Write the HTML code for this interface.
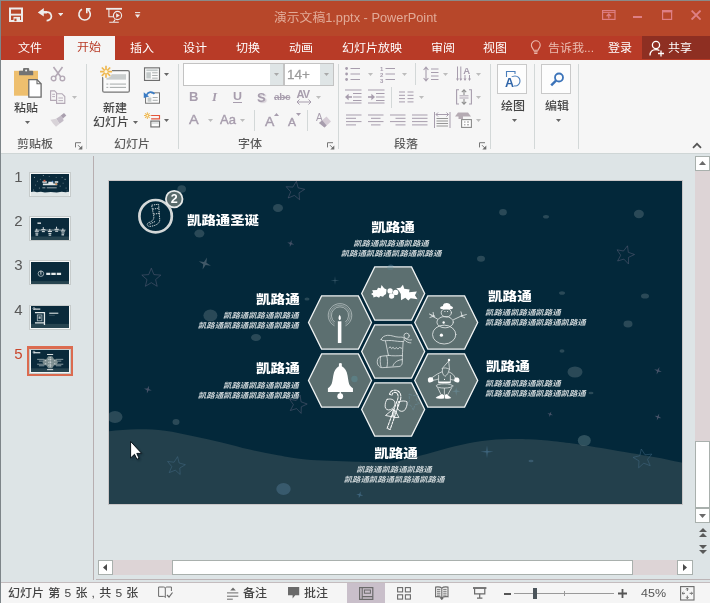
<!DOCTYPE html>
<html lang="zh-CN">
<head>
<meta charset="utf-8">
<title>演示文稿1.pptx - PowerPoint</title>
<style>
*{box-sizing:border-box;margin:0;padding:0}
html,body{width:710px;height:603px;overflow:hidden;background:#dde4e6}
body{position:relative;font-family:"Liberation Sans","Noto Sans CJK SC",sans-serif;font-size:12px;color:#444}
#app{will-change:transform;position:absolute;left:0;top:0;width:710px;height:603px;overflow:hidden}
#app div,#app svg,#app span{position:absolute}
.t{white-space:nowrap;line-height:1;font-weight:500;transform:scaleY(0.94);transform-origin:50% 58%}
.w{color:#fff}
.lb{color:#5c5c5c}
.sep{width:1px;background:#d3d8d8}
.st{font-family:"Liberation Sans","Noto Sans CJK SC",sans-serif;font-weight:900;color:#fff;font-size:12.25px;white-space:nowrap;line-height:1}
.ss{font-family:"Liberation Sans","Noto Sans CJK SC",sans-serif;font-style:italic;font-weight:bold;color:#ccd4d7;font-size:7.3px;white-space:nowrap;line-height:10px}
</style>
</head>
<body>
<div id="app">
<div id="title" style="left:0;top:0;width:710px;height:36px;background:#b7472a">
<svg style="left:9px;top:7px" width="15" height="16" viewBox="0 0 15 16" ><path d="M1 1.6h12v12.3h-12z" fill="none" stroke="#eeeceb" stroke-width="2"/><rect x="1" y="6.7" width="12" height="1.9" fill="#eeeceb"/><rect x="4.5" y="9.9" width="6.5" height="5" fill="#eeeceb"/><rect x="5.4" y="11.6" width="2.1" height="2.6" fill="#b5492a"/></svg>
<svg style="left:37px;top:7px" width="16" height="15" viewBox="0 0 16 15" ><polygon points="0.8,5.5 6.8,0.9 6.8,3.9 10,3.9 10,6.6 6.8,6.6 6.8,9.6" fill="#eeeceb"/><path d="M6.5 5.2 H10.2 a4.1 4.1 0 0 1 2.6 7.3 C12 13.1 10.8 13.6 9.6 13.6" fill="none" stroke="#eeeceb" stroke-width="1.7"/></svg>
<svg style="left:58px;top:13px" width="5.4" height="3.2" viewBox="0 0 5.4 3.2" ><polygon points="0,0 5.4,0 2.7,3.2" fill="#eeeceb"/></svg>
<svg style="left:77px;top:7px" width="16" height="16" viewBox="0 0 16 16" ><path d="M10.6 2.5 A5.7 5.7 0 1 1 5.0 2.3" fill="none" stroke="#eeeceb" stroke-width="1.6"/><path d="M9.8 6.2 V1.9 H13.6" fill="none" stroke="#eeeceb" stroke-width="1.6"/></svg>
<svg style="left:106px;top:7px" width="17" height="17" viewBox="0 0 17 17" ><path d="M0.1 1.8H16" stroke="#eeeceb" stroke-width="1.8"/><path d="M2.9 2V9.7H7.4" fill="none" stroke="#eeeceb" stroke-width="1.1"/><path d="M9 12.6L7.4 15.2M3.2 15.3H12.8" fill="none" stroke="#eeeceb" stroke-width="1.1"/><circle cx="11.5" cy="8.5" r="4.1" fill="none" stroke="#eeeceb" stroke-width="1.1"/><polygon points="10.2,6.3 13.8,8.5 10.2,10.7" fill="#eeeceb"/></svg>
<svg style="left:134px;top:12px" width="7" height="7" viewBox="0 0 7 7" ><rect x="1" y="0.1" width="5.2" height="1" fill="#eeeceb"/><polygon points="1,2.6 6.2,2.6 3.6,6" fill="#eeeceb"/></svg>
<div class="t" style="left:274px;top:12px;font-size:12.8px;color:#e2ab98;font-weight:400">演示文稿1.pptx - PowerPoint</div>
<svg style="left:602px;top:10px" width="14" height="10" viewBox="0 0 14 10" ><rect x="0.6" y="0.6" width="12.4" height="8.8" fill="none" stroke="#de7f84" stroke-width="1.2"/><path d="M1 2.4H13" stroke="#de7f84" stroke-width="1"/><path d="M6.8 8.6V4.2M4.6 6.2L6.8 4L9 6.2" fill="none" stroke="#de7f84" stroke-width="1.3"/></svg>
<div style="left:633px;top:16px;width:9px;height:2px;background:#de7f84"></div>
<svg style="left:662px;top:10px" width="11" height="10" viewBox="0 0 11 10" ><rect x="0.6" y="0.6" width="9" height="8.8" fill="none" stroke="#de7f84" stroke-width="1.2"/><rect x="0" y="0" width="10.2" height="2.4" fill="#de7f84"/></svg>
<svg style="left:691px;top:10px" width="10" height="10" viewBox="0 0 10 10" ><path d="M0.6 0.6L9.6 9.6M9.6 0.6L0.6 9.6" stroke="#de7f84" stroke-width="1.9"/></svg>
</div>
<div id="tabs" style="left:0;top:36px;width:710px;height:24px;background:#b83b27">
<div style="left:64px;top:0;width:51px;height:24px;background:#f5f5f5"></div>
<div class="t" style="left:18px;top:6px;color:#fff;font-weight:400">文件</div>
<div class="t" style="left:77px;top:5.4px;color:#b83b27;font-weight:400">开始</div>
<div class="t" style="left:130px;top:6px;color:#fff;font-weight:400">插入</div>
<div class="t" style="left:183px;top:6px;color:#fff;font-weight:400">设计</div>
<div class="t" style="left:236px;top:6px;color:#fff;font-weight:400">切换</div>
<div class="t" style="left:289px;top:6px;color:#fff;font-weight:400">动画</div>
<div class="t" style="left:342px;top:6px;color:#fff;font-weight:400">幻灯片放映</div>
<div class="t" style="left:431px;top:6px;color:#fff;font-weight:400">审阅</div>
<div class="t" style="left:483px;top:6px;color:#fff;font-weight:400">视图</div>
<svg style="left:530px;top:4px" width="12" height="16" viewBox="0 0 12 16" ><path d="M3.6 10.2 C3.4 8.6 1.4 7.6 1.4 5.2 A4.4 4.4 0 0 1 10.2 5.2 C10.2 7.6 8.2 8.6 8 10.2 Z" fill="none" stroke="#eab8ac" stroke-width="1.1"/><path d="M3.8 11.8H7.8M4.2 13.4H7.4" stroke="#eab8ac" stroke-width="1.1"/></svg>
<div class="t" style="left:548px;top:6px;color:#ebbdb1;font-weight:400">告诉我...</div>
<div class="t" style="left:608px;top:6px;color:#fff;font-weight:400">登录</div>
<div style="left:642px;top:0;width:68px;height:23px;background:#8e2f22"></div>
<svg style="left:649px;top:4px" width="16" height="17" viewBox="0 0 16 17" ><circle cx="7" cy="5" r="3.6" fill="none" stroke="#fff" stroke-width="1.3"/><path d="M1 15.5 C1 11.5 3.5 9.6 7 9.6 C8.4 9.6 9.6 9.9 10.4 10.5" fill="none" stroke="#fff" stroke-width="1.3"/><path d="M12 10.5V16.5M9 13.5H15" stroke="#fff" stroke-width="1.3"/></svg>
<div class="t" style="left:668px;top:6px;color:#fff;font-weight:400">共享</div>
</div>
<div id="ribbon" style="left:0;top:60px;width:710px;height:94px;background:#f6f6f6;border-bottom:1px solid #cfd6d6">
<svg style="left:14px;top:7px" width="29" height="32" viewBox="0 0 29 32" ><rect x="0" y="3.8" width="24" height="24.9" fill="#eebf6e"/><path d="M5 8.3V4.6a0.8 0.8 0 0 1 0.8-0.8H9V2a1.1 1.1 0 0 1 1.1-1.1h4a1.1 1.1 0 0 1 1.1 1.1V3.8H18.4a0.8 0.8 0 0 1 0.8 0.8V8.3Z" fill="#737373"/><circle cx="12.1" cy="3.4" r="1" fill="#f0f0f0"/><path d="M14.8 12.6H23L27.1 16.7V30.1H14.8Z" fill="#fff" stroke="#6a6a6a" stroke-width="1.3"/><path d="M23 12.6V16.7H27.1" fill="none" stroke="#6a6a6a" stroke-width="1.1"/></svg>
<div class="t" style="left:14px;top:42px;color:#444">粘贴</div>
<svg style="left:25px;top:61px" width="5" height="3" viewBox="0 0 5 3" ><polygon points="0,0 5,0 2.5,3" fill="#666"/></svg>
<svg style="left:50px;top:6px" width="16" height="16" viewBox="0 0 16 16" ><path d="M3.5 1L10.8 11M12.5 1L5.2 11" stroke="#b3a8b5" stroke-width="1.6" fill="none"/><circle cx="3.6" cy="12.4" r="2.3" fill="none" stroke="#b3a8b5" stroke-width="1.4"/><circle cx="12.4" cy="12.4" r="2.3" fill="none" stroke="#b3a8b5" stroke-width="1.4"/></svg>
<svg style="left:50px;top:30px" width="16" height="14" viewBox="0 0 16 14" ><path d="M0.6 0.9H4.6L6.6 2.9V10.4H0.6Z" fill="none" stroke="#b3a8b5" stroke-width="1.1"/><path d="M2.2 4.3H5M2.2 6.6H5" stroke="#b3a8b5" stroke-width="0.9"/><path d="M6.6 3.7H12L14.8 6.5V13.4H6.6Z" fill="#f5f5f5" stroke="#b3a8b5" stroke-width="1.1"/><path d="M8.4 8H13M8.4 10.6H13" stroke="#b3a8b5" stroke-width="0.9"/></svg>
<svg style="left:72px;top:36px" width="5" height="3" viewBox="0 0 5 3" ><polygon points="0,0 5,0 2.5,3" fill="#bdbdbd"/></svg>
<svg style="left:0;top:0" width="90" height="94" viewBox="0 0 710 741.6"><polygon points="478,440 505,419 523,438 497,461" fill="#a99fae"/><polygon points="443,463 478,440 497,461 502,480 470,502" fill="#c3bbc6"/><polygon points="398,472 443,463 470,502 442,526 420,503" fill="#d8d3d8"/></svg>
<div class="t lb" style="left:17px;top:78.19999999999999px;">剪贴板</div>
<svg style="left:75px;top:82px" width="8" height="8" viewBox="0 0 8 8" ><path d="M0.5 5.4V0.7H6" fill="none" stroke="#777" stroke-width="1"/><path d="M3 3.2L6 6.2" fill="none" stroke="#777" stroke-width="1"/><polygon points="7.3,3.4 7.3,7.4 3.3,7.4" fill="#6e6e6e"/></svg>
<div class="sep" style="left:86px;top:4px;height:85px"></div>
<svg style="left:88px;top:0px" width="90" height="70" viewBox="0 0 710.0 552.2"><rect x="116" y="84" width="210" height="170" rx="12" fill="#fbfbfb" stroke="#757575" stroke-width="10"/><rect x="145" y="112" width="155" height="43" fill="#c9cdcd"/><path d="M145 190H160M172 190H300M145 216H160M172 216H300" stroke="#9a9f9f" stroke-width="7"/><circle cx="142" cy="92" r="50" fill="#f5f5f5"/><g stroke="#efb850" stroke-width="13"><path d="M142 45V140M95 92H190M109 59L175 125M175 59L109 125"/></g><circle cx="142" cy="92" r="13" fill="#fdf6e2"/></svg>
<div class="t" style="left:103px;top:42px;color:#444">新建</div>
<div class="t" style="left:93px;top:56px;color:#444">幻灯片</div>
<svg style="left:133px;top:61px" width="5" height="3" viewBox="0 0 5 3" ><polygon points="0,0 5,0 2.5,3" fill="#666"/></svg>
<svg style="left:88px;top:0px" width="90" height="70" viewBox="0 0 710.0 552.2"><rect x="446" y="62" width="118" height="99" fill="#fcfcfc" stroke="#6c6c6c" stroke-width="9"/><rect x="460" y="74" width="90" height="14" fill="#c3c9c9"/><rect x="460" y="96" width="36" height="50" fill="#c3c9c9"/><path d="M506 101H550M506 122H550M506 143H550" stroke="#8f9494" stroke-width="6"/><rect x="454" y="259" width="110" height="82" fill="#fcfcfc" stroke="#747474" stroke-width="8"/><rect x="470" y="296" width="30" height="33" fill="#c3c9c9"/><path d="M510 296H550M510 318H550" stroke="#8f9494" stroke-width="6"/><rect x="436" y="240" width="60" height="52" fill="#f5f5f5"/><path d="M524 268 C505 246 475 250 462 275" fill="none" stroke="#3a7cc5" stroke-width="13"/><polygon points="440,255 482,288 440,300" fill="#3a7cc5"/><g stroke="#efb850" stroke-width="8"><path d="M468 412V465M442 438H494M450 420L486 456M486 420L450 456"/></g><circle cx="468" cy="438" r="7" fill="#fdf6e2"/><path d="M498 438H564V464H498" fill="none" stroke="#e4553b" stroke-width="9"/><rect x="496" y="482" width="68" height="46" fill="#fcfcfc" stroke="#6c6c6c" stroke-width="9"/><path d="M505 497H556" stroke="#c3c9c9" stroke-width="8"/></svg>
<svg style="left:164px;top:13px" width="5" height="3" viewBox="0 0 5 3" ><polygon points="0,0 5,0 2.5,3" fill="#666"/></svg>
<svg style="left:164px;top:59px" width="5" height="3" viewBox="0 0 5 3" ><polygon points="0,0 5,0 2.5,3" fill="#666"/></svg>
<div class="t lb" style="left:114px;top:78.19999999999999px;">幻灯片</div>
<div class="sep" style="left:178px;top:4px;height:85px"></div>
<div style="left:183px;top:3px;width:101px;height:23px;background:#fff;border:1px solid #c3c3c3"></div>
<div style="left:270px;top:4px;width:13px;height:21px;background:#dfe5e6"></div>
<svg style="left:274px;top:13px" width="5" height="3" viewBox="0 0 5 3" ><polygon points="0,0 5,0 2.5,3" fill="#a9a9a9"/></svg>
<div style="left:284px;top:3px;width:50px;height:23px;background:#fff;border:1px solid #c3c3c3"></div>
<div style="left:320px;top:4px;width:13px;height:21px;background:#dfe5e6"></div>
<svg style="left:324px;top:13px" width="5" height="3" viewBox="0 0 5 3" ><polygon points="0,0 5,0 2.5,3" fill="#a9a9a9"/></svg>
<div class="t" style="left:287px;top:8px;font-size:13.5px;color:#9b9b9b;-webkit-text-stroke:0.3px #9b9b9b">14+</div>
<div class="t" style="left:189px;top:30px;font-size:13px;font-weight:bold;color:#a79dad">B</div>
<div class="t" style="left:212px;top:30px;font-size:13px;font-weight:bold;font-style:italic;font-family:'Liberation Serif',serif;color:#a79dad">I</div>
<div class="t" style="left:233px;top:30px;font-size:12.5px;color:#a79dad;font-weight:bold">U</div>
<div style="left:233px;top:42px;width:9px;height:1px;background:#a79dad"></div>
<div class="t" style="left:257px;top:31px;font-size:13px;font-weight:bold;color:#a79dad;text-shadow:1.5px 1.5px 1px #d5cfd6">S</div>
<div class="t" style="left:274px;top:32px;font-size:10px;color:#a79dad;text-decoration:line-through;font-weight:bold;letter-spacing:-0.3px">abc</div>
<div class="t" style="left:296.5px;top:28.5px;font-size:11px;color:#a79dad;font-weight:bold;letter-spacing:-0.9px">AV</div>
<svg style="left:296px;top:39px" width="16" height="6" viewBox="0 0 16 6" ><path d="M1 3H15M3.5 0.5L1 3L3.5 5.5M12.5 0.5L15 3L12.5 5.5" fill="none" stroke="#a79dad" stroke-width="1"/></svg>
<svg style="left:316px;top:36px" width="5" height="3" viewBox="0 0 5 3" ><polygon points="0,0 5,0 2.5,3" fill="#bdbdbd"/></svg>
<div class="t" style="left:189px;top:52.3px;font-size:14.5px;color:#a79dad;-webkit-text-stroke:0.4px #a79dad">A</div>
<svg style="left:208px;top:59px" width="5" height="3" viewBox="0 0 5 3" ><polygon points="0,0 5,0 2.5,3" fill="#bdbdbd"/></svg>
<div class="t" style="left:220px;top:53.2px;font-size:13px;color:#a79dad;-webkit-text-stroke:0.4px #a79dad">Aa</div>
<svg style="left:240px;top:59px" width="5" height="3" viewBox="0 0 5 3" ><polygon points="0,0 5,0 2.5,3" fill="#bdbdbd"/></svg>
<div class="sep" style="left:254px;top:50px;height:21px"></div>
<div class="t" style="left:265px;top:54px;font-size:14px;color:#a79dad;-webkit-text-stroke:0.4px #a79dad">A</div>
<svg style="left:274px;top:53px" width="5" height="3" viewBox="0 0 5 3" ><polygon points="0,3 5,3 2.5,0" fill="#a79dad"/></svg>
<div class="t" style="left:288px;top:56px;font-size:12px;color:#a79dad;-webkit-text-stroke:0.4px #a79dad">A</div>
<svg style="left:296px;top:53px" width="5" height="3" viewBox="0 0 5 3" ><polygon points="0,0 5,0 2.5,3" fill="#a79dad"/></svg>
<div class="sep" style="left:307px;top:50px;height:21px"></div>
<svg style="left:316px;top:52px" width="16" height="17" viewBox="0 0 16 17" ><text x="0" y="9" font-size="10" fill="#a79dad" font-family="Liberation Sans, sans-serif">A</text><path d="M3 11L10.5 4.5L15 9.5L8.5 15.5Z" fill="#d6cdd6"/><path d="M3 11L6.2 8.2L10.6 13.4L8.5 15.5Z" fill="#a79dad"/></svg>
<div class="t lb" style="left:238px;top:78.19999999999999px;">字体</div>
<svg style="left:327px;top:82px" width="8" height="8" viewBox="0 0 8 8" ><path d="M0.5 5.4V0.7H6" fill="none" stroke="#777" stroke-width="1"/><path d="M3 3.2L6 6.2" fill="none" stroke="#777" stroke-width="1"/><polygon points="7.3,3.4 7.3,7.4 3.3,7.4" fill="#6e6e6e"/></svg>
<div class="sep" style="left:338px;top:4px;height:85px"></div>
<svg style="left:345px;top:6px" width="16" height="16" viewBox="0 0 16 16" ><circle cx="1.6" cy="2.5" r="1.4" fill="#a79dad"/><circle cx="1.6" cy="8" r="1.4" fill="#a79dad"/><circle cx="1.6" cy="13.5" r="1.4" fill="#a79dad"/><path d="M5.5 2.5H15M5.5 8H15M5.5 13.5H15" stroke="#a79dad" stroke-width="1.1"/></svg>
<svg style="left:368px;top:13px" width="5" height="3" viewBox="0 0 5 3" ><polygon points="0,0 5,0 2.5,3" fill="#bdbdbd"/></svg>
<svg style="left:380px;top:5px" width="16" height="18" viewBox="0 0 16 18" ><text x="0" y="5.5" font-size="6" fill="#a79dad" font-family="Liberation Sans, sans-serif" font-weight="bold">1</text><text x="0" y="11.5" font-size="6" fill="#a79dad" font-family="Liberation Sans, sans-serif" font-weight="bold">2</text><text x="0" y="17.5" font-size="6" fill="#a79dad" font-family="Liberation Sans, sans-serif" font-weight="bold">3</text><path d="M5.5 3.5H15M5.5 9H15M5.5 14.5H15" stroke="#a79dad" stroke-width="1.1"/></svg>
<svg style="left:402px;top:13px" width="5" height="3" viewBox="0 0 5 3" ><polygon points="0,0 5,0 2.5,3" fill="#bdbdbd"/></svg>
<div class="sep" style="left:415px;top:3px;height:22px"></div>
<svg style="left:423px;top:6px" width="16" height="16" viewBox="0 0 16 16" ><path d="M3 1.5V14.5M0.6 4L3 1.2L5.4 4M0.6 12L3 14.8L5.4 12" fill="none" stroke="#a79dad" stroke-width="1.1"/><path d="M8 3H15.5M8 6.5H15.5M8 10H15.5M8 13.5H15.5" stroke="#a79dad" stroke-width="1.1"/></svg>
<svg style="left:443px;top:13px" width="5" height="3" viewBox="0 0 5 3" ><polygon points="0,0 5,0 2.5,3" fill="#bdbdbd"/></svg>
<svg style="left:456px;top:6px" width="16" height="16" viewBox="0 0 16 16" ><path d="M1.5 0.5V14M4.8 0.5V14M9 9V14M13.5 9V14" stroke="#a79dad" stroke-width="1"/><path d="M0 12.5L1.5 15L3 12.5M3.3 12.5L4.8 15L6.3 12.5M7.5 12.5L9 15L10.5 12.5M12 12.5L13.5 15L15 12.5" fill="#a79dad"/><text x="7.2" y="8" font-size="9.5" font-weight="bold" fill="#a79dad" font-family="Liberation Sans, sans-serif">A</text></svg>
<svg style="left:476px;top:13px" width="5" height="3" viewBox="0 0 5 3" ><polygon points="0,0 5,0 2.5,3" fill="#bdbdbd"/></svg>
<svg style="left:345px;top:29px" width="17" height="15" viewBox="0 0 17 15" ><path d="M0 1H16.5M8 4.5H16.5M8 8H16.5M8 11.5H16.5M0 14H16.5" stroke="#a79dad" stroke-width="1"/><path d="M1 8H7" stroke="#a79dad" stroke-width="1.6"/><polygon points="0,8 3.6,4.8 3.6,11.2" fill="#a79dad"/></svg>
<svg style="left:368px;top:29px" width="17" height="15" viewBox="0 0 17 15" ><path d="M0 1H16.5M8 4.5H16.5M8 8H16.5M8 11.5H16.5M0 14H16.5" stroke="#a79dad" stroke-width="1"/><path d="M0 8H5" stroke="#a79dad" stroke-width="1.6"/><polygon points="7,8 3.4,4.8 3.4,11.2" fill="#a79dad"/></svg>
<div class="sep" style="left:391px;top:27px;height:21px"></div>
<svg style="left:399px;top:31px" width="15" height="12" viewBox="0 0 15 12" ><path d="M0 1H6M8.5 1H14.5M0 4.3H6M8.5 4.3H14.5M0 7.6H6M8.5 7.6H14.5M0 10.9H6M8.5 10.9H14.5" stroke="#a79dad" stroke-width="1"/></svg>
<svg style="left:419px;top:36px" width="5" height="3" viewBox="0 0 5 3" ><polygon points="0,0 5,0 2.5,3" fill="#bdbdbd"/></svg>
<svg style="left:456px;top:29px" width="16" height="16" viewBox="0 0 16 16" ><path d="M3 0.8H0.6V15H3M13 0.8H15.4V15H13" fill="none" stroke="#a79dad" stroke-width="1.1"/><path d="M8 1V6M5.8 3.2L8 0.8L10.2 3.2M8 15V10M5.8 12.8L8 15.2L10.2 12.8" fill="none" stroke="#8f8f8f" stroke-width="1.1"/><path d="M3.5 6.8H12.5M3.5 9H12.5" stroke="#a79dad" stroke-width="0.9"/></svg>
<svg style="left:476px;top:36px" width="5" height="3" viewBox="0 0 5 3" ><polygon points="0,0 5,0 2.5,3" fill="#bdbdbd"/></svg>
<svg style="left:346px;top:54px" width="16" height="12" viewBox="0 0 16 12" ><path d="M0 1H15.5M0 4.3H10M0 7.6H15.5M0 10.9H10" stroke="#a79dad" stroke-width="1"/></svg>
<svg style="left:368px;top:54px" width="16" height="12" viewBox="0 0 16 12" ><path d="M0 1H15.5M3 4.3H12.5M0 7.6H15.5M3 10.9H12.5" stroke="#a79dad" stroke-width="1"/></svg>
<svg style="left:390px;top:54px" width="16" height="12" viewBox="0 0 16 12" ><path d="M0 1H15.5M5.5 4.3H15.5M0 7.6H15.5M5.5 10.9H15.5" stroke="#a79dad" stroke-width="1"/></svg>
<svg style="left:412px;top:54px" width="16" height="12" viewBox="0 0 16 12" ><path d="M0 1H15.5M0 4.3H15.5M0 7.6H15.5M0 10.9H15.5" stroke="#a79dad" stroke-width="1"/></svg>
<svg style="left:434px;top:52px" width="17" height="16" viewBox="0 0 17 16" ><path d="M0.5 0V16M16 0V16" stroke="#a79dad" stroke-width="1"/><path d="M2 2.5H14.5M4 0.5L2 2.5L4 4.5M12.5 0.5L14.5 2.5L12.5 4.5" fill="none" stroke="#a79dad" stroke-width="1"/><path d="M2.5 6.5H14M2.5 9H14M2.5 11.5H14M2.5 14H14" stroke="#8a8a8a" stroke-width="0.9"/></svg>
<svg style="left:455px;top:52px" width="17" height="16" viewBox="0 0 17 16" ><path d="M0 4.5L3 0.5H13L16 4.5H8V7H3.5V4.5Z" fill="#b5abb3"/><rect x="6.6" y="7.6" width="9.8" height="7.8" fill="#fff" stroke="#8a8a8a" stroke-width="1.1"/><path d="M9 10H10.5M12 10H14M9 12.8H10.5M12 12.8H14" stroke="#8a8a8a" stroke-width="0.9"/></svg>
<svg style="left:476px;top:59px" width="5" height="3" viewBox="0 0 5 3" ><polygon points="0,0 5,0 2.5,3" fill="#bdbdbd"/></svg>
<div class="t lb" style="left:394px;top:78.19999999999999px;">段落</div>
<svg style="left:479px;top:82px" width="8" height="8" viewBox="0 0 8 8" ><path d="M0.5 5.4V0.7H6" fill="none" stroke="#777" stroke-width="1"/><path d="M3 3.2L6 6.2" fill="none" stroke="#777" stroke-width="1"/><polygon points="7.3,3.4 7.3,7.4 3.3,7.4" fill="#6e6e6e"/></svg>
<div class="sep" style="left:490px;top:4px;height:85px"></div>
<div style="left:497px;top:4px;width:30px;height:30px;background:#fdfdfd;border:1px solid #c9c9c9"></div>
<svg style="left:503px;top:9.5px" width="19" height="19" viewBox="0 0 19 19" ><path d="M3.5 10V1.5H12V4" fill="none" stroke="#4a7ebb" stroke-width="1.1"/><circle cx="12" cy="11" r="5" fill="none" stroke="#4a7ebb" stroke-width="1.1"/><rect x="2" y="7" width="9" height="11" fill="#fdfdfd"/><text x="2" y="17" font-size="12.5" font-weight="bold" fill="#2e64a8" font-family="Liberation Sans, sans-serif">A</text></svg>
<div class="t" style="left:501px;top:40px;color:#444">绘图</div>
<svg style="left:512px;top:59px" width="5" height="3" viewBox="0 0 5 3" ><polygon points="0,0 5,0 2.5,3" fill="#666"/></svg>
<div class="sep" style="left:534px;top:4px;height:85px"></div>
<div style="left:541px;top:4px;width:30px;height:30px;background:#fdfdfd;border:1px solid #c9c9c9"></div>
<svg style="left:549.8px;top:12px" width="15" height="15" viewBox="0 0 15 15" ><circle cx="9" cy="5.5" r="4" fill="none" stroke="#3b73b9" stroke-width="1.8"/><path d="M6 8.6L1.2 13.4" stroke="#3b73b9" stroke-width="2.4"/></svg>
<div class="t" style="left:545px;top:40px;color:#444">编辑</div>
<svg style="left:556px;top:59px" width="5" height="3" viewBox="0 0 5 3" ><polygon points="0,0 5,0 2.5,3" fill="#666"/></svg>
<div class="sep" style="left:578px;top:4px;height:85px"></div>
<svg style="left:692px;top:81.5px" width="10" height="7" viewBox="0 0 10 7" ><path d="M1 5.8L5 1.8L9 5.8" fill="none" stroke="#555" stroke-width="1.7"/></svg>
</div>
<div id="work" style="left:0;top:154px;width:710px;height:428px;background:#dde4e6">
<div style="left:93px;top:2px;width:1px;height:424px;background:#b7aeb0"></div>
<div class="t" style="left:14.3px;top:15.300000000000011px;font-size:15px;color:#585858">1</div>
<div style="left:29.3px;top:18.30000000000001px;width:41.4px;height:25px;background:#f4f6f6;border:1px solid #c6cbcb"></div>
<svg style="left:30.7px;top:19.600000000000023px" width="38.6" height="22.4" viewBox="0 0 39 23" preserveAspectRatio="none"><rect width="39" height="23" fill="#0a2a3b"/><path d="M0 18.6 L3 18 L6 18.8 L10 18.2 L14 19 L20 18.4 L26 19 L31 18.2 L35 18.8 L39 18.2 V23 H0Z" fill="#dfe6e7"/><path d="M11.5 8.2H16M17.5 8.8H22.5M24 8.2H27.5M12 10.6H26.5" stroke="#e4e9ea" stroke-width="1.7"/><path d="M11.5 14.2H14.5M16 14.2H26" stroke="#aab7bc" stroke-width="0.9"/><rect x="12.6" y="6" width="2" height="1.8" fill="#d4553c"/><rect x="24.6" y="9.6" width="1.8" height="1.6" fill="#d98a4c"/><rect x="21" y="7" width="1.4" height="1.4" fill="#5b8fd0"/><rect x="3" y="3" width="0.9" height="0.9" fill="#cfd8da" fill-opacity="0.8"/><rect x="6" y="7" width="0.9" height="0.9" fill="#cfd8da" fill-opacity="0.6"/><rect x="8" y="14" width="0.9" height="0.9" fill="#cfd8da" fill-opacity="0.7"/><rect x="4" y="11" width="0.9" height="0.9" fill="#cfd8da" fill-opacity="0.5"/><rect x="31" y="3" width="0.9" height="0.9" fill="#cfd8da" fill-opacity="0.7"/><rect x="34" y="5" width="0.9" height="0.9" fill="#cfd8da" fill-opacity="0.9"/><rect x="29" y="12" width="0.9" height="0.9" fill="#cfd8da" fill-opacity="0.7"/><rect x="35" y="14" width="0.9" height="0.9" fill="#cfd8da" fill-opacity="0.6"/><rect x="18" y="2" width="0.9" height="0.9" fill="#cfd8da" fill-opacity="0.5"/><rect x="12" y="1" width="0.9" height="0.9" fill="#cfd8da" fill-opacity="0.8"/><rect x="25" y="3" width="0.9" height="0.9" fill="#cfd8da" fill-opacity="0.5"/><rect x="9" y="5" width="0.9" height="0.9" fill="#cfd8da" fill-opacity="0.5"/><rect x="32" y="9" width="0.9" height="0.9" fill="#cfd8da" fill-opacity="0.5"/><rect x="2" y="16" width="0.9" height="0.9" fill="#cfd8da" fill-opacity="0.6"/><rect x="36" y="17" width="0.9" height="0.9" fill="#cfd8da" fill-opacity="0.5"/></svg>
<div class="t" style="left:14.3px;top:59.30000000000001px;font-size:15px;color:#585858">2</div>
<div style="left:29.3px;top:62.30000000000001px;width:41.4px;height:25px;background:#f4f6f6;border:1px solid #c6cbcb"></div>
<svg style="left:30.7px;top:63.60000000000002px" width="38.6" height="22.4" viewBox="0 0 39 23" preserveAspectRatio="none"><rect width="39" height="23" fill="#0a2a3b"/><rect y="19" width="39" height="4" fill="#274450"/><rect x="6.5" y="4.6" width="3.6" height="1.4" fill="#e4e9ea"/><path d="M4 12.4H35" stroke="#aab7bc" stroke-width="0.8"/><path d="M3.8 13.6h4.2M4.3999999999999995 15.6h3M5.8 11.0v2" stroke="#e4e9ea" stroke-width="1"/><path d="M10.4 12h4.2M11.0 14h3M12.4 9.4v2" stroke="#e4e9ea" stroke-width="1"/><path d="M17 13.8h4.2M17.6 15.8h3M19 11.200000000000001v2" stroke="#e4e9ea" stroke-width="1"/><path d="M23.8 11.6h4.2M24.400000000000002 13.6h3M25.8 9.0v2" stroke="#e4e9ea" stroke-width="1"/><path d="M30.2 13.4h4.2M30.8 15.4h3M32.2 10.8v2" stroke="#e4e9ea" stroke-width="1"/><rect x="4.6" y="16.6" width="2.6" height="1.6" fill="#aab7bc"/><rect x="17.8" y="16.8" width="2.6" height="1.6" fill="#aab7bc"/><rect x="30.8" y="16.4" width="2.6" height="1.6" fill="#aab7bc"/></svg>
<div class="t" style="left:14.3px;top:103.30000000000001px;font-size:15px;color:#585858">3</div>
<div style="left:29.3px;top:106.30000000000001px;width:41.4px;height:25px;background:#f4f6f6;border:1px solid #c6cbcb"></div>
<svg style="left:30.7px;top:107.60000000000002px" width="38.6" height="22.4" viewBox="0 0 39 23" preserveAspectRatio="none"><rect width="39" height="23" fill="#0a2a3b"/><rect y="19.6" width="39" height="3.4" fill="#274450"/><circle cx="10" cy="12" r="2.8" fill="none" stroke="#aab7bc" stroke-width="0.9"/><path d="M10 9V13" stroke="#e4e9ea" stroke-width="0.9"/><path d="M15.4 12.2H19.5M20.5 12.2H25M26 12.2H30.4" stroke="#e4e9ea" stroke-width="2.2"/></svg>
<div class="t" style="left:14.3px;top:147.5px;font-size:15px;color:#585858">4</div>
<div style="left:29.3px;top:150.5px;width:41.4px;height:25px;background:#f4f6f6;border:1px solid #c6cbcb"></div>
<svg style="left:30.7px;top:151.8px" width="38.6" height="22.4" viewBox="0 0 39 23" preserveAspectRatio="none"><rect width="39" height="23" fill="#0a2a3b"/><rect y="18.4" width="39" height="4.6" fill="#274450"/><path d="M2.6 3.2H9.4" stroke="#e4e9ea" stroke-width="1.2"/><circle cx="3" cy="2.6" r="1" fill="none" stroke="#e4e9ea" stroke-width="0.6"/><path d="M4 6.8H13.6V19.6M4 17.4H13.4" fill="none" stroke="#e4e9ea" stroke-width="1.3"/><rect x="6.4" y="9.2" width="4.6" height="6" fill="none" stroke="#aab7bc" stroke-width="0.9"/><rect x="7.6" y="10.6" width="2.2" height="2.6" fill="#aab7bc"/><path d="M18.4 7.4H27.6" stroke="#e4e9ea" stroke-width="1.1"/><path d="M18.4 9.6H24" stroke="#aab7bc" stroke-width="0.5" stroke-opacity="0.6"/></svg>
<div class="t" style="left:14.3px;top:191.5px;font-size:15px;color:#c9462c">5</div>
<div style="left:27px;top:192.0px;width:46px;height:29.6px;background:#db6b50"></div>
<div style="left:29.3px;top:194.5px;width:41.4px;height:25px;background:#f4f6f6;border:1px solid #c6cbcb"></div>
<svg style="left:30.7px;top:195.8px" width="38.6" height="22.4" viewBox="0 0 39 23" preserveAspectRatio="none"><rect width="39" height="23" fill="#0a2a3b"/><rect y="18.8" width="39" height="4.2" fill="#274450"/><path d="M2.6 2.8H9.4" stroke="#e4e9ea" stroke-width="1.2"/><circle cx="3" cy="2.2" r="1" fill="none" stroke="#e4e9ea" stroke-width="0.6"/><path d="M16.2 4.6H22.4M16.2 20.2H22.4" stroke="#e4e9ea" stroke-width="1"/><path d="M6.2 9.6H13.4M8 11.4H13.4M6.2 14.6H13.4M8 16.2H13.4M25.2 9.6H32.6M25.2 11.4H30.6M25.2 14.6H32.6M25.2 16.2H30.6" stroke="#aab7bc" stroke-width="0.8"/><path d="M17.4 6.4h4l2 3.2 2.2 0 1.6 3-1.6 3-2.2 0-2 3.2h-4l-2-3.2-2.2 0-1.6-3 1.6-3 2.2 0z" fill="#7d8e90"/><path d="M17.4 9.6h4M17.4 12.6h4M17.4 15.6h4M15.4 11h-2M15.4 14.2h-2M23.4 11h2M23.4 14.2h2M19.4 7v11.6" stroke="#e4e9ea" stroke-width="0.8" stroke-dasharray="1.2 0.7"/></svg>
<div id="slide" style="left:109px;top:27px;width:573px;height:323px;background:#03283a;overflow:hidden;box-shadow:0 0 0 1px #c9c6c7">
<svg style="left:0;top:0" width="573" height="323" viewBox="0 0 573 323"><path d="M-20.0 253.0 C-16.7 252.6 -8.0 251.1 0.0 250.3 C8.0 249.5 18.7 248.4 28.0 248.3 C37.3 248.2 46.6 248.5 56.0 249.7 C65.4 250.9 75.0 253.3 84.5 255.3 C94.0 257.3 103.3 259.3 112.7 261.5 C122.1 263.7 131.4 266.5 140.8 268.6 C150.2 270.7 159.6 272.6 169.0 274.2 C178.4 275.8 184.0 277.3 197.0 278.4 C210.0 279.5 229.8 280.1 247.0 280.7 C264.2 281.3 271.2 280.9 300.0 282.0 C328.8 283.1 374.5 285.3 420.0 287.0 C465.5 288.7 547.5 291.2 573.0 292.0 V330 H-20 Z" fill="#23404c"/><path d="M250.0 296.0 C253.3 294.5 263.2 289.7 270.0 287.0 C276.8 284.3 283.0 282.3 291.0 280.0 C299.0 277.7 308.6 275.4 317.8 273.0 C327.0 270.6 336.8 267.5 346.0 265.3 C355.2 263.1 364.0 261.2 373.0 260.0 C382.0 258.8 392.2 258.4 400.0 258.1 C407.8 257.8 412.5 257.9 420.0 258.3 C427.5 258.7 436.4 259.4 445.0 260.3 C453.6 261.2 460.1 262.0 471.6 263.7 C483.1 265.4 501.8 268.6 514.0 270.7 C526.2 272.8 535.2 274.2 545.0 276.0 C554.8 277.8 563.3 279.6 572.5 281.6 C581.7 283.6 595.4 286.9 600.0 288.0 V330 H250 Z" fill="#23404c"/><ellipse cx="72.69999999999999" cy="8" rx="4.3" ry="3.8" fill="#8fa0a6" fill-opacity="0.28"/><ellipse cx="169" cy="27" rx="5" ry="4" fill="#8fa0a6" fill-opacity="0.28"/><ellipse cx="90.4" cy="52.5" rx="5" ry="4" fill="#8fa0a6" fill-opacity="0.28"/><ellipse cx="101.4" cy="134.5" rx="7" ry="6" fill="#8fa0a6" fill-opacity="0.28"/><ellipse cx="6" cy="236" rx="7.5" ry="6" fill="#8fa0a6" fill-opacity="0.28"/><ellipse cx="67" cy="241" rx="3.5" ry="3" fill="#8fa0a6" fill-opacity="0.28"/><ellipse cx="394" cy="31.30000000000001" rx="3.8" ry="3.3" fill="#8fa0a6" fill-opacity="0.28"/><ellipse cx="437" cy="35.80000000000001" rx="3" ry="1.8" fill="#8fa0a6" fill-opacity="0.28"/><ellipse cx="529.9" cy="33" rx="5" ry="4.2" fill="#8fa0a6" fill-opacity="0.28"/><ellipse cx="372" cy="77.69999999999999" rx="4" ry="3" fill="#8fa0a6" fill-opacity="0.28"/><ellipse cx="453" cy="112" rx="3" ry="1.8" fill="#8fa0a6" fill-opacity="0.28"/><ellipse cx="536" cy="115" rx="4" ry="2.6" fill="#8fa0a6" fill-opacity="0.28"/><ellipse cx="519" cy="143" rx="4.5" ry="3.4" fill="#8fa0a6" fill-opacity="0.28"/><ellipse cx="466" cy="191" rx="7.5" ry="5.5" fill="#8fa0a6" fill-opacity="0.28"/><ellipse cx="453" cy="170" rx="2.5" ry="1.8" fill="#8fa0a6" fill-opacity="0.28"/><ellipse cx="482" cy="212" rx="2.5" ry="1.2" fill="#8fa0a6" fill-opacity="0.28"/><ellipse cx="198" cy="118" rx="2.5" ry="1.5" fill="#8fa0a6" fill-opacity="0.28"/><ellipse cx="147" cy="156.5" rx="5" ry="3.5" fill="#8fa0a6" fill-opacity="0.28"/><ellipse cx="174.5" cy="308" rx="7.2" ry="6" fill="#4a6f88" fill-opacity="0.55"/><ellipse cx="422" cy="280" rx="2.5" ry="1.2" fill="#4a6f88" fill-opacity="0.55"/><ellipse cx="281.8" cy="86" rx="3" ry="2.5" fill="#4a6f88" fill-opacity="0.55"/><ellipse cx="475.29999999999995" cy="259.5" rx="6.5" ry="5.6" fill="#7f9aa0" fill-opacity="0.35"/><polygon points="187.4,0.3 189.1,6.8 195.7,8.3 190.0,11.9 190.6,18.7 185.4,14.4 179.2,17.0 181.7,10.8 177.2,5.7 183.9,6.1" fill="none" stroke="#6f6c86" stroke-opacity="0.42" stroke-width="1"/><polygon points="42.3,87.2 44.9,93.6 51.8,94.1 46.6,98.6 48.2,105.3 42.3,101.7 36.4,105.3 38.0,98.6 32.8,94.1 39.7,93.6" fill="none" stroke="#6f6c86" stroke-opacity="0.42" stroke-width="1"/><polygon points="518.5,64.8 519.3,71.3 525.5,73.5 519.6,76.3 519.4,82.9 514.9,78.1 508.6,80.0 511.7,74.2 508.0,68.8 514.5,70.0" fill="none" stroke="#6f6c86" stroke-opacity="0.42" stroke-width="1"/><polygon points="191.2,214.3 192.0,220.8 198.2,223.0 192.3,225.8 192.1,232.4 187.6,227.6 181.3,229.5 184.4,223.7 180.7,218.3 187.2,219.5" fill="none" stroke="#6f6c86" stroke-opacity="0.42" stroke-width="1"/><polygon points="68.6,275.6 70.1,282.0 76.4,283.7 70.8,287.0 71.2,293.5 66.3,289.2 60.2,291.6 62.8,285.6 58.6,280.5 65.1,281.2" fill="none" stroke="#4a7390" stroke-opacity="0.42" stroke-width="1"/><polygon points="532.3,268.0 536.0,273.8 542.8,273.1 538.5,278.4 541.2,284.7 534.8,282.2 529.6,286.8 530.0,279.9 524.1,276.4 530.8,274.7" fill="none" stroke="#4a7390" stroke-opacity="0.42" stroke-width="1"/><polygon points="98.0,76.4 97.4,81.7 101.9,84.7 96.6,84.1 93.6,88.6 94.2,83.3 89.7,80.3 95.0,80.9" fill="#7d8894" fill-opacity="0.5"/><polygon points="182.6,59.0 182.6,62.0 185.2,63.4 182.2,63.4 180.8,66.0 180.8,63.0 178.2,61.6 181.2,61.6" fill="#6f6c86" fill-opacity="0.6"/><polygon points="39.9,204.7 39.9,208.0 42.8,209.6 39.5,209.6 37.9,212.5 37.9,209.2 35.0,207.6 38.3,207.6" fill="#6f6c86" fill-opacity="0.6"/><polygon points="550.4,185.9 550.0,189.2 552.8,191.1 549.5,190.7 547.6,193.5 548.0,190.2 545.2,188.3 548.5,188.7" fill="#6f6c86" fill-opacity="0.6"/><polygon points="550.2,232.6 549.9,235.6 552.4,237.2 549.4,236.9 547.8,239.4 548.1,236.4 545.6,234.8 548.6,235.1" fill="#6f6c86" fill-opacity="0.6"/><polygon points="442.2,230.5 442.0,232.9 444.0,234.3 441.6,234.1 440.2,236.1 440.4,233.7 438.4,232.3 440.8,232.5" fill="#6f6c86" fill-opacity="0.6"/><polygon points="251.6,310.3 251.6,313.3 254.2,314.7 251.2,314.7 249.8,317.3 249.8,314.3 247.2,312.9 250.2,312.9" fill="#4a7390" fill-opacity="0.7"/><polygon points="226.0,95.0 226.5,99.0 230.5,99.5 226.5,100.0 226.0,104.0 225.5,100.0 221.5,99.5 225.5,99.0" fill="#6d8796" fill-opacity="0.45"/><polygon points="378.0,264.2 378.7,270.0 384.5,270.7 378.7,271.4 378.0,277.2 377.3,271.4 371.5,270.7 377.3,270.0" fill="#4a7390" fill-opacity="0.7"/><polygon points="363.0,193.5 363.4,196.6 366.5,197.0 363.4,197.4 363.0,200.5 362.6,197.4 359.5,197.0 362.6,196.6" fill="#6d8796" fill-opacity="0.4"/><polygon points="321.0,122.0 321.5,125.5 325.0,126.0 321.5,126.5 321.0,130.0 320.5,126.5 317.0,126.0 320.5,125.5" fill="#6d8796" fill-opacity="0.4"/></svg>
<svg style="left:0;top:0" width="573" height="323" viewBox="0 0 573 323"><polygon points="252.65,112.50 265.75,85.95 302.55,85.95 315.65,112.50 302.55,139.05 265.75,139.05" fill="#5c6f70" stroke="#f1f4f4" stroke-width="1.3"/><polygon points="199.50,141.50 212.60,114.95 249.40,114.95 262.50,141.50 249.40,168.05 212.60,168.05" fill="#5c6f70" stroke="#f1f4f4" stroke-width="1.3"/><polygon points="305.70,141.50 318.80,114.95 355.60,114.95 368.70,141.50 355.60,168.05 318.80,168.05" fill="#5c6f70" stroke="#f1f4f4" stroke-width="1.3"/><polygon points="252.65,170.50 265.75,143.95 302.55,143.95 315.65,170.50 302.55,197.05 265.75,197.05" fill="#5c6f70" stroke="#f1f4f4" stroke-width="1.3"/><polygon points="199.50,199.50 212.60,172.95 249.40,172.95 262.50,199.50 249.40,226.05 212.60,226.05" fill="#5c6f70" stroke="#f1f4f4" stroke-width="1.3"/><polygon points="305.70,199.50 318.80,172.95 355.60,172.95 368.70,199.50 355.60,226.05 318.80,226.05" fill="#5c6f70" stroke="#f1f4f4" stroke-width="1.3"/><polygon points="252.65,228.50 265.75,201.95 302.55,201.95 315.65,228.50 302.55,255.05 265.75,255.05" fill="#5c6f70" stroke="#f1f4f4" stroke-width="1.3"/><g transform="translate(193,168) scale(0.10704)" ><circle cx="490" cy="280" r="30" fill="#5d8a94" fill-opacity="0.55"/></g><g transform="translate(299,168) scale(0.10704)" ><path d="M450 355 L456 388 L490 395 L456 402 L450 438 L444 402 L410 395 L444 388Z" fill="#6f98a8" fill-opacity="0.5"/></g><g transform="translate(246,197) scale(0.10704)" ><path d="M505 150 L545 165 L585 160 L570 205 L600 240 L560 250 L545 300 L520 255 L485 250 L510 215Z" fill="none" stroke="#6f98a8" stroke-opacity="0.45" stroke-width="8" stroke-dasharray="30 8"/></g><g transform="translate(246,81) scale(0.10704)" ><ellipse cx="330" cy="55" rx="30" ry="20" fill="#5d8a94" fill-opacity="0.3"/><path d="M560 300 C600 280 610 330 580 380" fill="none" stroke="#6f98a8" stroke-opacity="0.35" stroke-width="8"/></g><g transform="translate(246,81) scale(0.10704)" ><path d="M150 300 L170 285 L160 265 L205 262 L215 240 L240 245 L248 215 L272 245 L295 258 L290 300 L270 312 L262 325 L235 318 L225 335 L200 322 L172 332 L170 312Z" fill="#ffffff"/><path d="M385 245 L425 240 L448 212 L460 250 L510 258 L505 282 L578 275 L560 310 L585 348 L520 338 L498 360 L470 335 L430 358 L428 300 L410 268Z" fill="#ffffff"/><circle cx="328" cy="270" r="25" fill="#ffffff"/><circle cx="380" cy="284" r="25" fill="#ffffff"/><circle cx="342" cy="318" r="25" fill="#ffffff"/></g><g transform="translate(193,110) scale(0.10704)" ><path d="M303.4 325.1 A110 110 0 1 1 406.6 325.1" fill="none" stroke="#dfe4e4" stroke-opacity="0.75" stroke-width="7"/><path d="M304.7 308.6 A95 95 0 1 1 405.3 308.6" fill="none" stroke="#dfe4e4" stroke-opacity="0.6" stroke-width="6"/><path d="M305.7 291.0 A80 80 0 1 1 404.3 291.0" fill="none" stroke="#dfe4e4" stroke-opacity="0.75" stroke-width="7"/><rect x="335" y="283" width="33" height="203" fill="#ffffff"/><path d="M352 222 C368 245 366 268 352 273 C338 268 336 245 352 222Z" fill="#ffffff"/></g><g transform="translate(299,110) scale(0.10704)" ><g fill="none" stroke="#dfe4e4" stroke-width="8" stroke-linecap="round"><ellipse cx="338" cy="407" rx="109" ry="88"/><ellipse cx="347" cy="291" rx="77" ry="53"/><ellipse cx="358" cy="203" rx="48" ry="40"/><path d="M275 262 L215 228 M200 215 L250 236 M235 200 L240 240 M205 247 L245 234 M425 268 L510 228 M495 195 L505 232 M545 220 L500 232 M530 250 L495 235"/></g><path d="M300 158 C300 145 320 142 326 140 C328 118 345 112 362 112 C380 112 396 120 398 140 C410 142 422 148 420 158 C418 170 390 172 360 172 C330 172 302 170 300 158Z" fill="#ffffff"/><circle cx="333" cy="294" r="11" fill="#ffffff"/><circle cx="312" cy="413" r="15" fill="#ffffff"/><circle cx="345" cy="192" r="5" fill="#ffffff"/><circle cx="370" cy="192" r="5" fill="#ffffff"/></g><g transform="translate(246,139) scale(0.10704)" ><g fill="none" stroke="#dfe4e4" stroke-width="7.5" stroke-linecap="round" stroke-linejoin="round"><path d="M245 182 C250 160 275 145 305 143 C345 141 370 160 410 160 C430 160 448 158 458 168 C462 180 460 192 455 200 C420 205 380 195 340 192 C305 190 280 196 262 192 C252 190 245 188 245 182Z"/><circle cx="482" cy="148" r="25"/><path d="M465 168 C480 185 505 190 528 186 M462 185 C478 205 500 214 522 214"/><path d="M285 198 L312 330 M450 202 C445 270 442 340 442 395 C442 420 430 432 410 435 L260 445 C225 447 208 420 208 390 C208 360 225 337 258 337 L312 332"/><path d="M316 262 L328 250 L342 268 L356 254 L370 272 L386 256 L400 272 L416 256 L436 264"/><path d="M312 330 C350 338 400 335 440 332 M240 340 C232 370 234 410 244 442 M296 336 C306 370 306 410 298 442 M355 428 C365 395 400 372 442 370"/></g></g><g transform="translate(193,168) scale(0.10704)" ><path d="M345 135 Q358 125 372 135 V162 C400 175 418 205 426 250 C432 290 436 325 448 342 C455 352 465 360 476 366 V402 H242 V366 C253 360 262 352 268 342 C282 325 286 290 292 250 C300 205 318 175 345 162Z" fill="#ffffff"/><rect x="352" y="400" width="11" height="22" fill="#ffffff"/><circle cx="357" cy="441" r="27" fill="#ffffff"/></g><g transform="translate(299,168) scale(0.10704)" ><g fill="none" stroke="#dfe4e4" stroke-width="7.5" stroke-linecap="round" stroke-linejoin="round"><path d="M320 182 L380 112 L388 190 M320 182 C340 172 365 176 388 190"/><path d="M322 190 C315 215 325 240 345 256 C365 244 380 222 384 196"/><path d="M318 212 C285 225 255 245 228 265 M382 214 C410 225 435 245 440 268 M236 292 C255 290 272 285 286 280 M440 290 C425 292 405 288 396 282"/><path d="M286 245 L286 308 M396 248 L396 308"/><ellipse cx="341" cy="345" rx="78" ry="20"/><path d="M278 362 L312 432 M408 362 L368 432 M340 368 L340 425"/></g><path d="M283 312 H398" stroke="#ffffff" stroke-width="16" fill="none"/><path d="M188 275 C195 262 215 262 232 268 L238 300 C225 312 205 318 192 310 C184 300 184 285 188 275Z" fill="#ffffff"/><path d="M478 280 C472 266 452 264 436 270 L430 300 C442 312 462 318 474 310 C482 302 482 290 478 280Z" fill="#ffffff"/><path d="M258 458 C270 440 300 436 318 420 L338 432 L336 462 C310 466 280 468 258 458Z" fill="#ffffff"/><path d="M404 458 C395 442 372 436 358 420 L342 432 L344 462 C365 466 388 468 404 458Z" fill="#ffffff"/><circle cx="383" cy="103" r="11" fill="#ffffff"/><circle cx="341" cy="284" r="5" fill="#ffffff"/></g><g transform="translate(246,197) scale(0.10704)" ><g fill="none" stroke="#ffffff" stroke-width="8" stroke-linecap="round" stroke-linejoin="round"><path d="M300 470 L398 200 C408 170 402 142 380 135 C362 130 350 142 345 160 L322 152 C332 120 358 108 388 116 C425 128 436 165 424 205 L328 482 Z" stroke-width="9.5" stroke-dasharray="24 11"/><path d="M300 200 C330 190 365 200 372 225 C378 255 360 285 330 296 C305 304 285 292 282 270 C280 245 285 215 300 200Z"/><path d="M408 222 C435 212 470 212 486 222 C490 250 480 290 455 308 C430 318 405 305 398 285 C394 262 398 240 408 222Z"/><path d="M355 292 L285 350 L345 362 Z M372 300 L410 368 L362 370 Z"/></g></g></svg>
<svg style="left:0;top:0" width="573" height="323" viewBox="0 0 573 323"><circle cx="46.599999999999994" cy="35.19999999999999" r="16.2" fill="none" stroke="#d4d8d8" stroke-width="2.7"/><circle cx="65.19999999999999" cy="18.099999999999994" r="8.3" fill="#596b6c" stroke="#e6e9e9" stroke-width="1.8"/><g transform="translate(46.599999999999994,35.19999999999999)" fill="none" stroke="#e4e8e8" stroke-width="0.9" stroke-dasharray="1.4 0.9"><path d="M-4 -11 L3 -12 L4 2 C5 7 1 9 -4 10 C-8 11 -10 8 -7 6.5 C-3 5 -1 3 -2 -1 Z"/><path d="M-3 -7 L3 -8 M-2 -2 L4 -3 M-6 8 L0 5"/></g><text x="65.19999999999999" y="22.19999999999999" text-anchor="middle" font-size="12.5" font-weight="bold" fill="#fff" font-family="Liberation Sans, sans-serif">2</text></svg>
<div class="st" style="left:78.4px;top:33.900000000000006px;font-size:12.25px;transform:scaleX(1.175);transform-origin:0 50%">凯路通圣诞</div>
<div class="st" style="left:184px;width:200px;text-align:center;transform-origin:50% 50%;top:41.2px;transform:scaleX(1.19)">凯路通</div>
<div class="ss" style="left:182px;width:200px;text-align:center;transform-origin:50% 50%;top:58px;transform:scaleX(1.15)">凯路通凯路通凯路通<br>凯路通凯路通凯路通凯路通</div>
<div class="st" style="right:382.5px;text-align:right;transform-origin:100% 50%;top:113.2px;transform:scaleX(1.19)">凯路通</div>
<div class="ss" style="right:383.5px;text-align:right;transform-origin:100% 50%;top:130px;transform:scaleX(1.15)">凯路通凯路通凯路通<br>凯路通凯路通凯路通凯路通</div>
<div class="st" style="right:382.5px;text-align:right;transform-origin:100% 50%;top:182.2px;transform:scaleX(1.19)">凯路通</div>
<div class="ss" style="right:383.5px;text-align:right;transform-origin:100% 50%;top:200px;transform:scaleX(1.15)">凯路通凯路通凯路通<br>凯路通凯路通凯路通凯路通</div>
<div class="st" style="left:379px;text-align:left;transform-origin:0 50%;top:110.2px;transform:scaleX(1.19)">凯路通</div>
<div class="ss" style="left:375.7px;text-align:left;transform-origin:0 50%;top:127.30000000000001px;transform:scaleX(1.15)">凯路通凯路通凯路通<br>凯路通凯路通凯路通凯路通</div>
<div class="st" style="left:376.8px;text-align:left;transform-origin:0 50%;top:180.2px;transform:scaleX(1.19)">凯路通</div>
<div class="ss" style="left:375.7px;text-align:left;transform-origin:0 50%;top:198.3px;transform:scaleX(1.15)">凯路通凯路通凯路通<br>凯路通凯路通凯路通凯路通</div>
<div class="st" style="left:187px;width:200px;text-align:center;transform-origin:50% 50%;top:267.2px;transform:scaleX(1.19)">凯路通</div>
<div class="ss" style="left:185px;width:200px;text-align:center;transform-origin:50% 50%;top:284px;transform:scaleX(1.15)">凯路通凯路通凯路通<br>凯路通凯路通凯路通凯路通</div>
</div>
<svg style="left:128px;top:285px" width="20" height="26" viewBox="0 0 20 26" ><defs><filter id="cs" x="-50%" y="-50%" width="200%" height="200%"><feGaussianBlur stdDeviation="1.1"/></filter></defs><path d="M4 4.5 V20.5 L7.9 16.8 L10.3 21.8 L12.5 20.8 L10.2 15.9 H15.1 Z" fill="#0a1a28" opacity="0.55" filter="url(#cs)"/><path d="M2.6 2.4 V19 L6.5 15.3 L8.9 20.3 L11.1 19.3 L8.8 14.4 H13.7 Z" fill="#fff" stroke="#08141c" stroke-width="1" stroke-linejoin="miter"/></svg>
<div style="left:695px;top:2px;width:15px;height:366px;background:#ddd4d6"></div>
<div style="left:695px;top:2px;width:15px;height:15px;background:#fff;border:1px solid #a9b0ad"></div>
<svg style="left:699px;top:7.300000000000011px" width="7" height="4" viewBox="0 0 7 4" ><polygon points="0,4 7,4 3.5,0" fill="#6a6a6a"/></svg>
<div style="left:695px;top:287px;width:15px;height:67px;background:#fff;border:1px solid #a9b0ad"></div>
<div style="left:695px;top:354px;width:15px;height:15px;background:#fff;border:1px solid #a9b0ad"></div>
<svg style="left:699px;top:360px" width="7" height="4" viewBox="0 0 7 4" ><polygon points="0,0 7,0 3.5,4" fill="#6a6a6a"/></svg>
<svg style="left:699px;top:373.6px" width="8" height="9" viewBox="0 0 8 9" ><polygon points="0,4 8,4 4,0" fill="#5a5a5a"/><polygon points="0,9 8,9 4,5" fill="#5a5a5a"/></svg>
<svg style="left:699px;top:391px" width="8" height="9" viewBox="0 0 8 9" ><polygon points="0,0 8,0 4,4" fill="#5a5a5a"/><polygon points="0,5 8,5 4,9" fill="#5a5a5a"/></svg>
<div style="left:98px;top:406px;width:595px;height:15px;background:#ddd4d6"></div>
<div style="left:98px;top:406px;width:15px;height:15px;background:#fff;border:1px solid #a9b0ad"></div>
<svg style="left:103px;top:410px" width="4" height="7" viewBox="0 0 4 7" ><polygon points="4,0 4,7 0,3.5" fill="#4a4a4a"/></svg>
<div style="left:172px;top:406px;width:461px;height:15px;background:#fff;border:1px solid #a9b0ad"></div>
<div style="left:677px;top:406px;width:16px;height:15px;background:#fff;border:1px solid #a9b0ad"></div>
<svg style="left:683px;top:410px" width="4" height="7" viewBox="0 0 4 7" ><polygon points="0,0 0,7 4,3.5" fill="#4a4a4a"/></svg>
<div style="left:96px;top:425px;width:614px;height:1px;background:#bcb4b6"></div>
</div>
<div id="status" style="left:0;top:582px;width:710px;height:21px;background:#f5f5f5;border-top:1px solid #c4bcbe">
<div class="t" style="left:8px;top:3.7px;color:#444;word-spacing:0.9px">幻灯片 第 5 张 , 共 5 张</div>
<svg style="left:158px;top:2.7px" width="16" height="13" viewBox="0 0 16 13" ><path d="M0.6 1H5.5C6.6 1 7.3 1.6 7.3 2.6V11.5C7.3 10.8 6.6 10.4 5.5 10.4H0.6Z" fill="none" stroke="#6a6a6a" stroke-width="1"/><path d="M7.3 2.6C7.3 1.6 8 1 9.1 1H13.4V5" fill="none" stroke="#6a6a6a" stroke-width="1"/><path d="M9 9L11 11L14.5 6.5" fill="none" stroke="#6a6a6a" stroke-width="1.2"/></svg>
<svg style="left:227px;top:3.7px" width="12" height="13" viewBox="0 0 12 13" ><polygon points="3.2,3.6 8.8,3.6 6,0.6" fill="#6a6a6a"/><path d="M0 5.9H11.3M0 9.2H11.3M0 12.2H5.8" stroke="#6a6a6a" stroke-width="1"/></svg>
<div class="t" style="left:243px;top:3.7px;color:#444">备注</div>
<svg style="left:288.4px;top:4.3px" width="12" height="12" viewBox="0 0 12 12" ><path d="M0 0H11.2V8.2H7.2L4.6 11.4V8.2H0Z" fill="#6a6a6a"/></svg>
<div class="t" style="left:304px;top:3.7px;color:#444">批注</div>
<div style="left:347px;top:0;width:38px;height:21px;background:#c9bfca"></div>
<svg style="left:359px;top:3.7px" width="15" height="13" viewBox="0 0 15 13" ><rect x="0.6" y="0.6" width="13.2" height="11.8" fill="none" stroke="#6a6a6a" stroke-width="1.2"/><path d="M3.2 0.6V12.4M3.2 9.6H13.8" stroke="#6a6a6a" stroke-width="1.1" fill="none"/><rect x="5.4" y="3" width="6" height="3.2" fill="none" stroke="#6a6a6a" stroke-width="1"/></svg>
<svg style="left:397px;top:3.7px" width="15" height="13" viewBox="0 0 15 13" ><rect x="0.6" y="0.6" width="5" height="4.3" fill="none" stroke="#6a6a6a" stroke-width="1.1"/><rect x="8.4" y="0.6" width="5" height="4.3" fill="none" stroke="#6a6a6a" stroke-width="1.1"/><rect x="0.6" y="7.8" width="5" height="4.3" fill="none" stroke="#6a6a6a" stroke-width="1.1"/><rect x="8.4" y="7.8" width="5" height="4.3" fill="none" stroke="#6a6a6a" stroke-width="1.1"/></svg>
<svg style="left:435px;top:3.3px" width="14" height="14" viewBox="0 0 14 14" ><path d="M6.8 2.2C5.5 0.9 3 0.7 0.6 1.1V10.8C3 10.4 5.5 10.6 6.8 11.9C8.1 10.6 10.6 10.4 13 10.8V1.1C10.6 0.7 8.1 0.9 6.8 2.2Z" fill="none" stroke="#6a6a6a" stroke-width="1.1"/><path d="M6.8 2.2V13.4M5.4 11.6L6.8 13.4L8.2 11.6" stroke="#6a6a6a" stroke-width="1.1" fill="none"/><path d="M2 3.4H5.4M2 5.3H5.4M2 7.2H5.4M2 9.1H5.4M8.2 3.4H11.6M8.2 5.3H11.6M8.2 7.2H11.6M8.2 9.1H11.6" stroke="#6a6a6a" stroke-width="0.9"/></svg>
<svg style="left:472.6px;top:4.3px" width="14" height="13" viewBox="0 0 14 13" ><path d="M0 1H13.4" stroke="#6a6a6a" stroke-width="1.8"/><path d="M1.6 1.4V6.8H11.8V1.4" fill="none" stroke="#6a6a6a" stroke-width="1.2"/><path d="M6.7 6.8V10.6M4 11.2H9.4" stroke="#6a6a6a" stroke-width="1.2"/></svg>
<div style="left:504px;top:9.7px;width:7px;height:2px;background:#555"></div>
<div style="left:514px;top:9.7px;width:100px;height:1px;background:#9a9a9a"></div>
<div style="left:564px;top:7.7px;width:1px;height:5px;background:#9a9a9a"></div>
<div style="left:532.6px;top:4.7px;width:4px;height:11px;background:#4c555b"></div>
<svg style="left:618px;top:5.7px" width="9" height="9" viewBox="0 0 9 9" ><path d="M4.5 0V9M0 4.5H9" stroke="#555" stroke-width="1.8"/></svg>
<div class="t" style="left:641px;top:3.7px;color:#555;font-size:12.5px">45%</div>
<svg style="left:680px;top:2.7px" width="15" height="15" viewBox="0 0 15 15" ><rect x="0.6" y="0.6" width="13.4" height="13.4" fill="none" stroke="#6a6a6a" stroke-width="1.1"/><path d="M7.3 2V5M7.3 12.6V9.6M2 7.3H5M12.6 7.3H9.6" stroke="#6a6a6a" stroke-width="1"/><path d="M6 3.4L7.3 2L8.6 3.4M6 11.2L7.3 12.6L8.6 11.2M3.4 6L2 7.3L3.4 8.6M11.2 6L12.6 7.3L11.2 8.6" fill="none" stroke="#6a6a6a" stroke-width="0.9"/></svg>
</div>
<div style="left:0;top:0;width:1px;height:603px;background:#7d8589"></div>
<div style="left:0;top:0;width:710px;height:1px;background:#8a8a88"></div>
</div>
</body>
</html>
